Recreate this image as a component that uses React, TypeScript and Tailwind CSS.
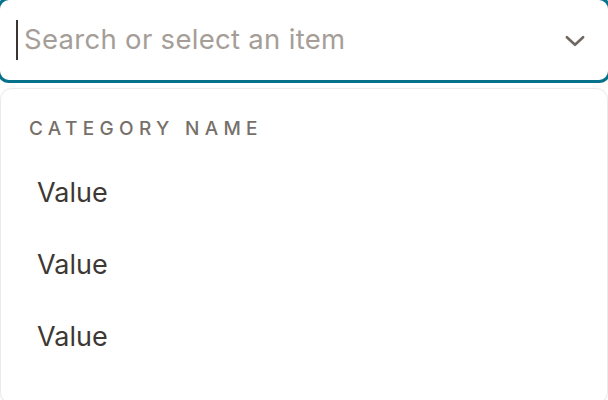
import React from "react";

export default function App() {
  const items = ["Value", "Value", "Value"];
  return (
    <div
      className="w-[608px] h-[400px] overflow-hidden bg-white"
      style={{ fontFamily: "Inter, 'Open Sans', sans-serif" }}
    >
      <div className="-mx-[3px] -mt-[3px] h-[86px] rounded-[12px] border-[3px] border-[#05718b] bg-white flex items-center pl-[16px] pr-[20px]">
        <div className="w-[2px] h-[40px] bg-[#3b3531] mr-[6px]" />
        <span className="flex-1 text-[27.5px] text-[#a59e98] leading-none tracking-[0.3px]">
          Search or select an item
        </span>
        <svg width="26" height="26" viewBox="0 0 24 24" fill="none" className="mt-[1px]">
          <path
            d="M4.5 8.5l7.5 7 7.5-7"
            stroke="#6f6862"
            strokeWidth="2.4"
            strokeLinecap="round"
            strokeLinejoin="round"
          />
        </svg>
      </div>
      <div className="mt-[5px] h-[316px] rounded-[12px] border border-[#ecebea] bg-white shadow-[0_1px_3px_rgba(0,0,0,0.06)] pt-[28px]">
        <div className="pl-[28px] h-[24px] flex items-center text-[19px] font-medium tracking-[0.28em] text-[#77706a]">
          CATEGORY NAME
        </div>
        <div className="mt-[16px] flex flex-col">
          {items.map((v, i) => (
            <div
              key={i}
              className="h-[72px] flex items-center pl-[36px] text-[27px] text-[#3d3834]"
            >
              {v}
            </div>
          ))}
        </div>
      </div>
    </div>
  );
}
